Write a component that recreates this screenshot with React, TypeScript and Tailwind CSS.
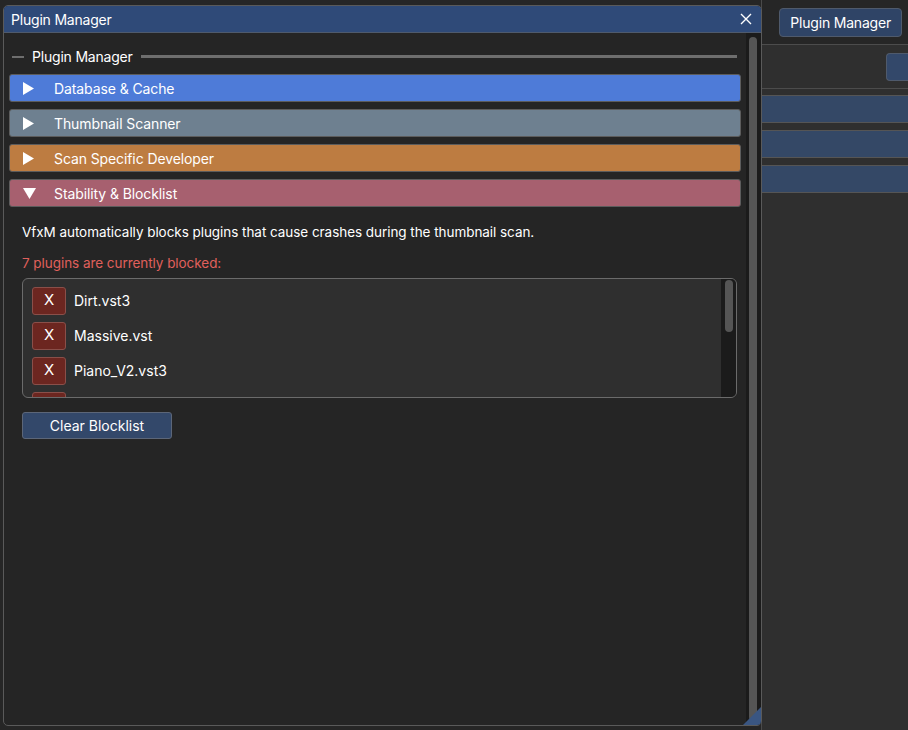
import * as React from "react";

const sections = [
  { title: "Database & Cache", color: "bg-[#4e7bd8]", open: false },
  { title: "Thumbnail Scanner", color: "bg-[#6e8090]", open: false },
  { title: "Scan Specific Developer", color: "bg-[#bd7c41]", open: false },
  { title: "Stability & Blocklist", color: "bg-[#a7606f]", open: true },
];

const blocked = ["Dirt.vst3", "Massive.vst", "Piano_V2.vst3", "Serum.vst3"];

function Arrow({ open }: { open: boolean }) {
  return open ? (
    <svg width="13" height="11" viewBox="0 0 13 11" className="shrink-0">
      <polygon points="0,0 13,0 6.5,11" fill="#ffffff" />
    </svg>
  ) : (
    <svg width="11" height="13" viewBox="0 0 11 13" className="shrink-0">
      <polygon points="0,0 11,6.5 0,13" fill="#ffffff" />
    </svg>
  );
}

function Header({ title, color, open }: { title: string; color: string; open: boolean }) {
  return (
    <div
      className={`flex h-[28px] items-center rounded-[3px] border border-[#5c5c5c] ${color} pl-[13px] text-[14px] text-white`}
    >
      <div className="flex w-[31px] items-center">
        <Arrow open={open} />
      </div>
      <span className="tracking-[-0.1px]">{title}</span>
    </div>
  );
}

function BlockedRow({ name }: { name: string }) {
  return (
    <div className="flex h-[28px] shrink-0 items-center gap-[8px]">
      <button className="flex h-[28px] w-[34px] items-center justify-center rounded-[3px] border border-[#8a4f49] bg-[#6c2620] text-[15px] text-white">
        X
      </button>
      <span className="text-[14px] text-white">{name}</span>
    </div>
  );
}

function PluginWindow() {
  return (
    <div className="absolute left-[3px] top-[5px] flex h-[721px] w-[759px] flex-col overflow-hidden rounded-[5px] border border-[#5a5a5a] bg-[#252525]">
      <div className="flex h-[27px] shrink-0 items-center justify-between border-b border-[#4f5a6c] bg-[#2f4a78] pl-[7px] pr-[9px] text-[14px] text-white">
        <span className="tracking-[-0.2px]">Plugin Manager</span>
        <svg width="12" height="12" viewBox="0 0 12 12">
          <path d="M1 1 L11 11 M11 1 L1 11" stroke="#ffffff" strokeWidth="1.4" />
        </svg>
      </div>
      <div className="flex min-h-0 flex-1">
        <div className="flex min-w-0 flex-1 flex-col px-[5px] pt-[13px]">
          <div className="flex items-center gap-[8px] pl-[3px] pr-[4px] text-[14px] text-white">
            <div className="h-[2px] w-[12px] bg-[#6e6e6e]" />
            <span className="tracking-[-0.2px]">Plugin Manager</span>
            <div className="h-[3px] flex-1 bg-[#6e6e6e]" />
          </div>
          <div className="mt-[7px] flex flex-col gap-[7px]">
            {sections.map((s) => (
              <Header key={s.title} {...s} />
            ))}
          </div>
          <div className="flex flex-col pl-[13px] pr-[4px]">
            <p className="mt-[15px] text-[13.5px] tracking-[-0.05px] text-white">
              VfxM automatically blocks plugins that cause crashes during the thumbnail scan.
            </p>
            <p className="mt-[11px] text-[13.5px] tracking-[-0.05px] text-[#e0605c]">
              7 plugins are currently blocked:
            </p>
            <div className="mt-[4px] flex h-[120px] overflow-hidden rounded-[6px] border border-[#6b6b6b] bg-[#2f2f2f]">
              <div className="flex flex-1 flex-col gap-[7px] overflow-hidden pl-[9px] pt-[8px]">
                {blocked.map((b) => (
                  <BlockedRow key={b} name={b} />
                ))}
              </div>
              <div className="flex w-[15px] justify-center bg-[#1b1b1b] pt-[1px]">
                <div className="h-[52px] w-[8px] rounded-full bg-[#555555]" />
              </div>
            </div>
            <button className="mt-[14px] flex h-[27px] w-[150px] items-center justify-center rounded-[3px] border border-[#5c6678] bg-[#33486a] text-[14px] text-white">
              Clear Blocklist
            </button>
          </div>
        </div>
        <div className="flex w-[15px] shrink-0 justify-center border-r border-[#1b1b1b] bg-[#1b1b1b] py-[4px]">
          <div className="w-[8px] rounded-full bg-[#555555]" />
        </div>
      </div>
      <svg width="18" height="18" viewBox="0 0 18 18" className="absolute bottom-0 right-0">
        <polygon points="18,0 18,18 0,18" fill="#3a5682" />
      </svg>
    </div>
  );
}

export default function App() {
  return (
    <div
      className="relative h-[730px] w-[908px] overflow-hidden bg-[#2f2f2f]"
      style={{ fontFamily: "Inter, 'Noto Sans', sans-serif" }}
    >
      <div className="flex h-full">
        <div className="h-full w-[762px] shrink-0 border-r border-[#4a4a4a] bg-[#262626]" />
        <div className="flex flex-1 flex-col">
          <div className="flex h-[45px] shrink-0 items-start justify-end border-b border-[#4c4c4c] bg-[#262626] pr-[6px] pt-[8px]">
            <button className="h-[29px] rounded-[4px] border border-[#4f5a6c] bg-[#2f4466] px-[10px] text-[14px] tracking-[-0.2px] text-white">
              Plugin Manager
            </button>
          </div>
          <div className="flex h-[44px] shrink-0 items-end justify-end border-b border-[#4c4c4c] pb-[7px]">
            <div className="h-[28px] w-[22px] rounded-l-[4px] border border-r-0 border-[#4f5a6c] bg-[#33486a]" />
          </div>
          <div className="mt-[6px] flex flex-col gap-[7px]">
            <div className="h-[28px] border-y border-[#555555] bg-[#344866]" />
            <div className="h-[28px] border-y border-[#555555] bg-[#344866]" />
            <div className="h-[28px] border-y border-[#555555] bg-[#344866]" />
          </div>
        </div>
      </div>
      <PluginWindow />
    </div>
  );
}
